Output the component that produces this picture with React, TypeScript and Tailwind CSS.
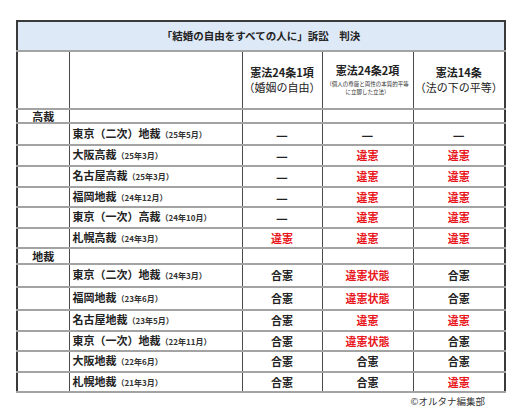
import React from "react"

type Cell = "dash" | "iken" | "goken" | "jotai"

interface Row {
  court: string
  date: string
  cells: [Cell, Cell, Cell]
  h: string
}

const highCourts: Row[] = [
  { court: "東京（二次）地裁", date: "（25年5月）", cells: ["dash", "dash", "dash"], h: "h-[22px]" },
  { court: "大阪高裁", date: "（25年3月）", cells: ["dash", "iken", "iken"], h: "h-[21px]" },
  { court: "名古屋高裁", date: "（25年3月）", cells: ["dash", "iken", "iken"], h: "h-[21px]" },
  { court: "福岡地裁", date: "（24年12月）", cells: ["dash", "iken", "iken"], h: "h-[20px]" },
  { court: "東京（一次）高裁", date: "（24年10月）", cells: ["dash", "iken", "iken"], h: "h-[21px]" },
  { court: "札幌高裁", date: "（24年3月）", cells: ["iken", "iken", "iken"], h: "h-[20px]" },
]

const districtCourts: Row[] = [
  { court: "東京（二次）地裁", date: "（24年3月）", cells: ["goken", "jotai", "goken"], h: "h-[23px]" },
  { court: "福岡地裁", date: "（23年6月）", cells: ["goken", "jotai", "goken"], h: "h-[23px]" },
  { court: "名古屋地裁", date: "（23年5月）", cells: ["goken", "iken", "iken"], h: "h-[21px]" },
  { court: "東京（一次）地裁", date: "（22年11月）", cells: ["goken", "jotai", "goken"], h: "h-[20px]" },
  { court: "大阪地裁", date: "（22年6月）", cells: ["goken", "goken", "goken"], h: "h-[21px]" },
  { court: "札幌地裁", date: "（21年3月）", cells: ["goken", "goken", "iken"], h: "h-[20px]" },
]

const td = "border-b-2 border-b-[#a3a3a3] border-l border-l-[#4a4a4a] p-0 align-middle"

function Verdict({ v }: { v: Cell }) {
  if (v === "dash") return <span className="text-[13px] font-bold text-[#222]">—</span>
  if (v === "iken") return <span className="font-bold text-[#e8151b]">違憲</span>
  if (v === "jotai") return <span className="font-bold text-[#e8151b]">違憲状態</span>
  return <span className="font-bold text-[#222]">合憲</span>
}

function CourtRow({ row }: { row: Row }) {
  return (
    <tr className={row.h}>
      <td className={td}></td>
      <td className={td}>
        <div className="flex items-baseline pl-[3px] -mt-[2px]">
          <span className="font-bold text-[11px] text-[#222]">{row.court}</span>
          <span className="font-bold text-[8px] text-[#333]">{row.date}</span>
        </div>
      </td>
      {row.cells.map((c, i) => (
        <td key={i} className={`${td} text-center text-[11px]`}>
          <Verdict v={c} />
        </td>
      ))}
    </tr>
  )
}

function SectionRow({ label, h }: { label: string; h: string }) {
  return (
    <tr className={h}>
      <td className={`${td} text-center text-[11px] font-bold text-[#222]`}>{label}</td>
      <td className={td}></td>
      <td className={td}></td>
      <td className={td}></td>
      <td className={td}></td>
    </tr>
  )
}

export default function App() {
  return (
    <div className="w-[530px] h-[416px] bg-white pt-[20px] pl-[16px]" style={{ fontFamily: '"Noto Sans CJK JP", "Noto Sans", sans-serif' }}>
      <table className="border-collapse border-2 border-[#3a3a3a] w-[488px] table-fixed leading-none">
        <colgroup>
          <col className="w-[52px]" />
          <col className="w-[173px]" />
          <col className="w-[80px]" />
          <col className="w-[91px]" />
          <col className="w-[92px]" />
        </colgroup>
        <tbody>
          <tr className="h-[30px]">
            <td colSpan={5} className="bg-[#dde9f6] border-b-2 border-b-[#a3a3a3] text-center text-[10.5px] font-bold text-[#222] p-0">
              「結婚の自由をすべての人に」訴訟　判決
            </td>
          </tr>
          <tr className="h-[58px]">
            <td className={td}></td>
            <td className={td}></td>
            <td className={`${td} text-center text-[#222]`}>
              <div className="text-[11px] font-bold">憲法24条1項</div>
              <div className="text-[11px] mt-[4px]">（婚姻の自由）</div>
            </td>
            <td className={`${td} text-center text-[#222]`}>
              <div className="text-[11px] font-bold">憲法24条2項</div>
              <div className="text-[5.5px] mt-[4px] leading-[8px] text-[#333]">
                （個人の尊厳と両性の本質的平等
                <br />
                に立脚した立法）
              </div>
            </td>
            <td className={`${td} text-center text-[#222]`}>
              <div className="text-[11px] font-bold">憲法14条</div>
              <div className="text-[11px] mt-[4px]">（法の下の平等）</div>
            </td>
          </tr>
          <SectionRow label="高裁" h="h-[14px]" />
          {highCourts.map((r, i) => (
            <CourtRow key={"h" + i} row={r} />
          ))}
          <SectionRow label="地裁" h="h-[16px]" />
          {districtCourts.map((r, i) => (
            <CourtRow key={"d" + i} row={r} />
          ))}
        </tbody>
      </table>
      <div className="w-[488px] flex justify-end pr-[19px] mt-[1px] text-[9.5px] text-[#333]">©オルタナ編集部</div>
    </div>
  )
}
